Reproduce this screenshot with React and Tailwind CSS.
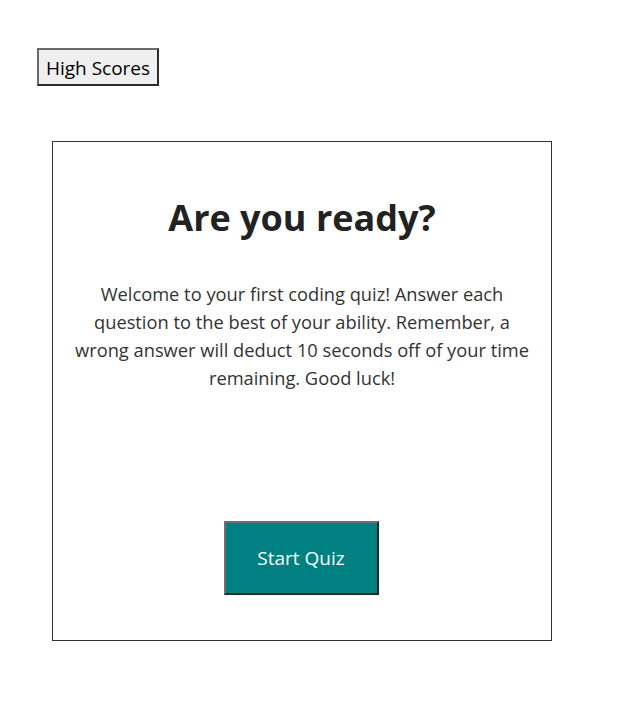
export default function App() {
  return (
    <div className="min-h-[725px] bg-white text-[#222] font-['Open_Sans',sans-serif]">
      <div className="pt-[48px] pl-[37px]">
        <button className="h-[38px] w-[122px] bg-[#efefef] border-2 border-t-[#6a6a6a] border-l-[#6a6a6a] border-r-[#2b2b2b] border-b-[#2b2b2b] text-[19px] leading-none text-black pt-[2px]">
          High Scores
        </button>
      </div>

      <div className="ml-[52px] mt-[55px] w-[500px] h-[500px] border border-[#333] flex flex-col items-center px-[20px]">
        <h1 className="mt-[52px] text-[36px] leading-[48px] font-bold text-[#222]">Are you ready?</h1>
        <p className="mt-[38px] text-[18.3px] leading-[28px] text-center text-[#333]">
          Welcome to your first coding quiz! Answer each question to the best of your ability. Remember, a wrong answer will deduct 10 seconds off of your time remaining. Good luck!
        </p>
        <button className="mt-auto mb-[45px] mr-[2px] w-[155px] h-[74px] bg-[#008080] text-white text-[19px] border-2 border-t-[#6f6f6f] border-l-[#6f6f6f] border-r-[#1a2a2a] border-b-[#1a2a2a]">
          Start Quiz
        </button>
      </div>
    </div>
  );
}
